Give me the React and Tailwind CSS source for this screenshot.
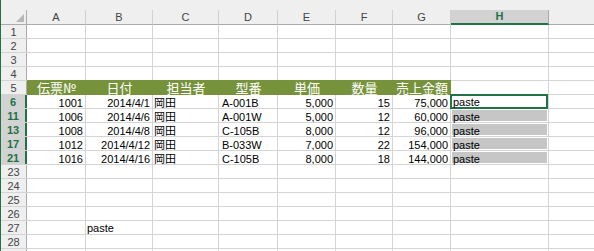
import React from "react";

const COLS = [
  { k: "A", w: "w-[59px]" },
  { k: "B", w: "w-[67px]" },
  { k: "C", w: "w-[66px]" },
  { k: "D", w: "w-[59px]" },
  { k: "E", w: "w-[58px]" },
  { k: "F", w: "w-[57px]" },
  { k: "G", w: "w-[58px]" },
  { k: "H", w: "w-[98px]" },
  { k: "", w: "w-[60px]" },
];

const HEAD = ["伝票№", "日付", "担当者", "型番", "単価", "数量", "売上金額"];

const DATA = [
  { r: "6", v: ["1001", "2014/4/1", "岡田", "A-001B", "5,000", "15", "75,000"] },
  { r: "11", v: ["1006", "2014/4/6", "岡田", "A-001W", "5,000", "12", "60,000"] },
  { r: "13", v: ["1008", "2014/4/8", "岡田", "C-105B", "8,000", "12", "96,000"] },
  { r: "17", v: ["1012", "2014/4/12", "岡田", "B-033W", "7,000", "22", "154,000"] },
  { r: "21", v: ["1016", "2014/4/16", "岡田", "C-105B", "8,000", "18", "144,000"] },
];

const ALIGN = ["right", "right", "left", "left", "right", "right", "right"];

const font = "font-['Liberation_Sans','Noto_Sans_CJK_JP',sans-serif]";

function RowHead({ label, selected }) {
  return (
    <div
      className={
        "w-[26px] shrink-0 h-full flex items-center justify-center text-[11px] leading-none " +
        (selected
          ? "bg-[#d2d2d2] text-[#217346] font-bold border-r-2 border-[#217346]"
          : "bg-[#efefef] text-[#444] border-r border-[#ababab]")
      }
    >
      <span className="pt-[1px]">{label}</span>
    </div>
  );
}

function EmptyRow({ label, children }) {
  return (
    <div className="flex h-[14px] shrink-0 border-b border-[#d4d4d4]">
      <RowHead label={label} />
      {COLS.map((c, i) => (
        <div
          key={i}
          className={c.w + " shrink-0 h-full border-r border-[#d4d4d4] text-[11px] leading-[15px] text-black"}
        >
          {children && children[i]}
        </div>
      ))}
    </div>
  );
}

export default function App() {
  return (
    <div className={"w-[594px] h-[251px] overflow-hidden bg-white flex " + font}>
      <div className="w-[1px] shrink-0 bg-[#217346]" />
      <div className="flex-1 flex flex-col overflow-hidden">
        <div className="h-[10px] shrink-0 bg-[#efefef]" />
        <div className="flex h-[15px] shrink-0 bg-[#efefef]">
          <div className="w-[26px] shrink-0 h-full border-r border-b border-[#ababab] flex items-end justify-end pr-[2px] pb-[2px]">
            <svg width="8" height="8" viewBox="0 0 8 8">
              <polygon points="8,0 8,8 0,8" fill="#b7b7b7" />
            </svg>
          </div>
          {COLS.map((c, i) =>
            c.k === "H" ? (
              <div
                key={i}
                className={c.w + " shrink-0 h-full bg-[#d2d2d2] border-r border-[#ababab] border-b-2 border-b-[#217346] flex items-center justify-center text-[11px] text-[#217346] font-bold leading-none"}
              >
                {c.k}
              </div>
            ) : (
              <div
                key={i}
                className={c.w + " shrink-0 h-full border-r border-r-[#d0d0d0] border-b border-b-[#ababab] flex items-center justify-center text-[11px] text-[#444] leading-none"}
              >
                {c.k}
              </div>
            )
          )}
        </div>

        <EmptyRow label="1" />
        <EmptyRow label="2" />
        <EmptyRow label="3" />
        <EmptyRow label="4" />

        <div className="flex h-[14px] shrink-0 border-b border-[#d4d4d4]">
          <RowHead label="5" />
          {COLS.map((c, i) =>
            i < 7 ? (
              <div
                key={i}
                className={c.w + " shrink-0 h-[15px] -mt-[1px] bg-[#76933c] flex items-center justify-center text-white text-[13px] leading-none font-['Noto_Sans_CJK_JP',sans-serif]"}
              >
                {HEAD[i]}
              </div>
            ) : (
              <div key={i} className={c.w + " shrink-0 h-full border-r border-[#d4d4d4]"} />
            )
          )}
        </div>

        {DATA.map((row, ri) => (
          <div key={row.r} className="flex h-[14px] shrink-0 border-b border-[#d4d4d4]">
            <RowHead label={row.r} selected />
            {COLS.map((c, i) => {
              if (i < 7) {
                return (
                  <div
                    key={i}
                    className={
                      c.w +
                      " shrink-0 h-full border-r border-[#d4d4d4] text-[11px] leading-[16px] text-black whitespace-nowrap overflow-hidden " +
                      (ALIGN[i] === "right" ? "text-right pr-[2px]" : i === 2 ? "text-left pl-[1px]" : "text-left pl-[3px]")
                    }
                  >
                    {row.v[i]}
                  </div>
                );
              }
              if (i === 7) {
                return (
                  <div key={i} className={c.w + " shrink-0 h-full border-r border-[#d4d4d4] bg-white"}>
                    {ri === 0 ? (
                      <div className="h-[15px] -mt-[1px] -ml-[1px] border-2 border-[#217346] bg-white text-[11px] leading-[13px] pl-[1px] text-black">
                        paste
                      </div>
                    ) : (
                      <div className="h-full p-[1px] bg-white">
                        <div className="h-full bg-[#c6c6c6] text-[11px] leading-[14px] pl-[1px] text-black">paste</div>
                      </div>
                    )}
                  </div>
                );
              }
              return <div key={i} className={c.w + " shrink-0 h-full border-r border-[#d4d4d4]"} />;
            })}
          </div>
        ))}

        <EmptyRow label="23" />
        <EmptyRow label="24" />
        <EmptyRow label="25" />
        <EmptyRow label="26" />
        <EmptyRow label="27">
          {[null, <span key="p" className="pl-[1px]">paste</span>]}
        </EmptyRow>
        <EmptyRow label="28" />
        <EmptyRow label="" />
      </div>
    </div>
  );
}
